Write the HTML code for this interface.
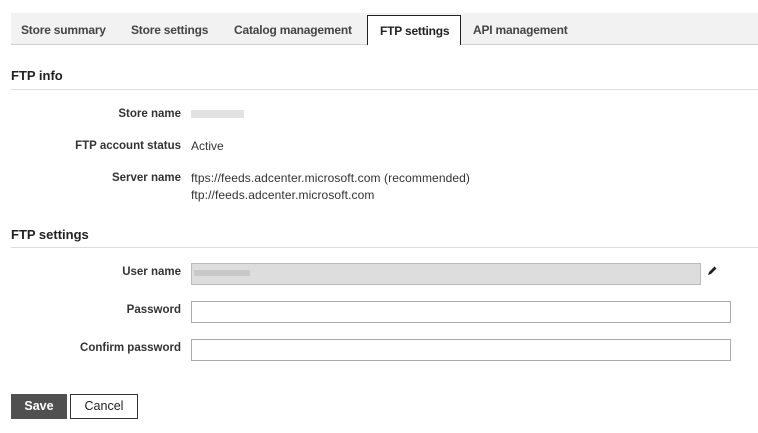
<!DOCTYPE html>
<html><head><meta charset="utf-8"><style>
body{margin:0;width:758px;height:433px;background:#fff;font-family:"Liberation Sans",Arial,sans-serif;color:#333;position:relative;overflow:hidden;font-size:12px}
.a{position:absolute;white-space:nowrap}
.tabs{position:absolute;left:11px;top:13px;width:747px;height:31px;background:#f2f2f2;border-bottom:1px solid #d0d0d0}
.tab{position:absolute;top:10px;font-weight:bold;font-size:12px;color:#444;letter-spacing:-0.2px}
.act{position:absolute;left:367px;top:15px;width:94px;height:30px;background:#fff;border:1px solid #222;border-bottom:none;box-sizing:border-box}
.h{font-weight:bold;font-size:13px;color:#222}
.line{position:absolute;left:11px;width:747px;height:1px;background:#ddd}
.l{font-weight:bold;text-align:right;width:170px;left:11px;color:#333;font-size:11.5px}
.in{position:absolute;left:191px;height:22px;border:1px solid #aaa;box-sizing:border-box;background:#fff}
.blur{position:absolute;background:#d6d6d6;height:8px}
</style></head><body>
<div class="tabs"></div>
<div class="act"></div>
<div class="tab a" style="left:21px;top:23px">Store summary</div>
<div class="tab a" style="left:131px;top:23px">Store settings</div>
<div class="tab a" style="left:234px;top:23px">Catalog management</div>
<div class="tab a" style="left:380px;top:24px;color:#222">FTP settings</div>
<div class="tab a" style="left:473px;top:23px">API management</div>

<div class="a h" style="left:11px;top:68px">FTP info</div>
<div class="line" style="top:89px"></div>

<div class="a l" style="top:108px">Store name</div>
<div class="blur" style="left:191px;top:110px;width:53px;background:#e2e2e2"></div>
<div class="a l" style="top:140px">FTP account status</div>
<div class="a" style="left:191px;top:139px">Active</div>
<div class="a l" style="top:172px">Server name</div>
<div class="a" style="left:191px;top:171px;letter-spacing:0.1px">ftps://feeds.adcenter.microsoft.com (recommended)</div>
<div class="a" style="left:191px;top:188px;letter-spacing:0.1px">ftp://feeds.adcenter.microsoft.com</div>

<div class="a h" style="left:11px;top:227px">FTP settings</div>
<div class="line" style="top:247px"></div>

<div class="a l" style="top:266px">User name</div>
<div class="in" style="top:263px;width:510px;background:#ddd;border-color:#bbb"></div>
<div class="blur" style="left:194px;top:270px;width:56px;background:#c8c8c8;height:6px"></div>
<svg class="a" style="left:706px;top:265px" width="12" height="12" viewBox="0 0 12 12"><path d="M2 10 L3 7 L8.5 1.5 L10.5 3.5 L5 9 Z" fill="#222"/></svg>
<div class="a l" style="top:304px">Password</div>
<div class="in" style="top:301px;width:540px"></div>
<div class="a l" style="top:342px">Confirm password</div>
<div class="in" style="top:339px;width:540px"></div>

<div class="a" style="left:11px;top:394px;width:56px;height:25px;background:#505050;color:#fff;font-weight:bold;font-size:12.5px;line-height:25px;text-align:center">Save</div>
<div class="a" style="left:70px;top:394px;width:68px;height:25px;border:1px solid #333;box-sizing:border-box;color:#222;font-size:12.5px;line-height:23px;text-align:center">Cancel</div>
</body></html>
